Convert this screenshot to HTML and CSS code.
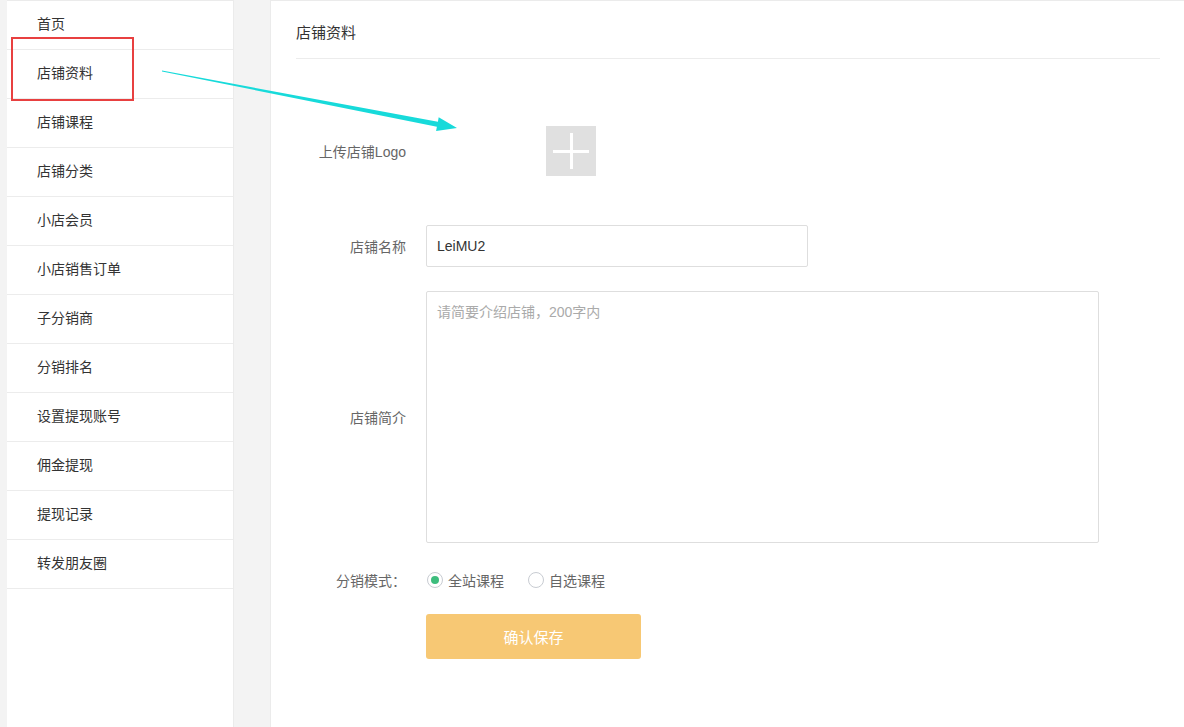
FILE: index.html
```html
<!DOCTYPE html>
<html lang="zh-CN">
<head>
    <meta charset="UTF-8">
    <title>店铺资料</title>
    <link rel="stylesheet" href="styles.css">
</head>
<body>
<div class="page">
    <ul class="side-nav">
        <li>首页</li>
        <li>店铺资料</li>
        <li>店铺课程</li>
        <li>店铺分类</li>
        <li>小店会员</li>
        <li>小店销售订单</li>
        <li>子分销商</li>
        <li>分销排名</li>
        <li>设置提现账号</li>
        <li>佣金提现</li>
        <li>提现记录</li>
        <li>转发朋友圈</li>
    </ul>

    <div class="main">
        <h2 class="main-title">店铺资料</h2>

        <div class="form-row row-logo">
            <label class="form-label">上传店铺Logo</label>
            <div class="logo-field">
                <div class="logo-upload"></div>
            </div>
        </div>

        <div class="form-row row-name">
            <label class="form-label">店铺名称</label>
            <input class="text-input" type="text" value="LeiMU2">
        </div>

        <div class="form-row row-intro">
            <label class="form-label">店铺简介</label>
            <textarea class="text-area" placeholder="请简要介绍店铺，200字内"></textarea>
        </div>

        <div class="form-row row-mode">
            <label class="form-label">分销模式：</label>
            <div class="radio-group">
                <span class="radio checked"></span><span class="radio-text">全站课程</span>
                <span class="radio"></span><span class="radio-text">自选课程</span>
            </div>
        </div>

        <div class="form-row row-submit">
            <span class="form-label"></span>
            <button class="save-btn">确认保存</button>
        </div>
    </div>
</div>

<!-- annotation overlay -->
<div class="mark-box"></div>
<svg class="mark-arrow" width="1184" height="727" viewBox="0 0 1184 727">
    <polygon fill="#17dada" points="162,70.6 437.9,121.7 438.7,117.3 457,128 436.1,131.1 436.9,126.7 162,71.4"/>
</svg>
</body>
</html>
```

FILE: styles.css
```css
* {
    box-sizing: border-box;
}

html, body {
    margin: 0;
    height: 100%;
}

body {
    background-color: #f3f3f3;
    font-family: "Liberation Sans", "Noto Sans CJK SC", sans-serif;
    font-size: 14px;
    color: #333;
}

.page {
    display: flex;
    gap: 36px;
    height: 100%;
    padding-left: 7px;
}

/* Sidebar */
.side-nav {
    list-style: none;
    margin: 0;
    padding: 0;
    width: 227px;
    background-color: #fff;
    border-top: 1px solid #ebebeb;
    border-right: 1px solid #ebebeb;
}

.side-nav li {
    height: 49px;
    line-height: 46px;
    padding-left: 30px;
    border-bottom: 1px solid #ececec;
    color: #333;
}

/* Main panel */
.main {
    flex: 1;
    background-color: #fff;
    border-top: 1px solid #ebebeb;
    border-left: 1px solid #ebebeb;
    padding: 0 24px 0 25px;
}

.main-title {
    margin: 0;
    height: 58px;
    padding-top: 22px;
    font-size: 15px;
    font-weight: normal;
    line-height: 20px;
    color: #333;
    border-bottom: 1px solid #ececec;
}

.form-row {
    display: flex;
    align-items: center;
    gap: 20px;
}

.form-label {
    width: 110px;
    flex-shrink: 0;
    text-align: right;
    color: #666;
    font-size: 14px;
}

.row-logo {
    margin-top: 67px;
    height: 50px;
}

.logo-field {
    padding-left: 120px;
}

.logo-upload {
    position: relative;
    width: 50px;
    height: 50px;
    background-color: #e0e0e0;
}

.logo-upload::before,
.logo-upload::after {
    content: "";
    position: absolute;
    background-color: #fff;
}

.logo-upload::before {
    left: 7px;
    top: 24px;
    width: 36px;
    height: 3px;
}

.logo-upload::after {
    left: 24px;
    top: 7px;
    width: 3px;
    height: 36px;
}

.row-name {
    margin-top: 49px;
}

.text-input {
    width: 382px;
    height: 42px;
    padding: 0 10px;
    border: 1px solid #dedede;
    border-radius: 2px;
    font-family: "Liberation Sans", "Noto Sans CJK SC", sans-serif;
    font-size: 14px;
    color: #333;
    outline: none;
}

.row-intro {
    margin-top: 24px;
}

.text-area {
    width: 673px;
    height: 252px;
    padding: 10px;
    border: 1px solid #dedede;
    border-radius: 2px;
    resize: none;
    font-family: "Liberation Sans", "Noto Sans CJK SC", sans-serif;
    font-size: 14px;
    line-height: 20px;
    outline: none;
}

.text-area::placeholder {
    color: #aaa;
}

.row-mode {
    margin-top: 27px;
    height: 20px;
}

.radio-group {
    display: flex;
    align-items: center;
    color: #666;
}

.radio {
    position: relative;
    width: 16px;
    height: 16px;
    border: 1px solid #c8ccd2;
    border-radius: 50%;
    margin-left: 1px;
    margin-right: 5px;
}

.radio.checked::after {
    content: "";
    position: absolute;
    left: 3px;
    top: 3px;
    width: 8px;
    height: 8px;
    border-radius: 50%;
    background-color: #3dbd7d;
}

.radio-text {
    margin-right: 23px;
}

.row-submit {
    margin-top: 24px;
}

.save-btn {
    width: 215px;
    height: 45px;
    border: none;
    border-radius: 3px;
    background-color: #f7c874;
    color: #fff;
    font-family: "Liberation Sans", "Noto Sans CJK SC", sans-serif;
    font-size: 15px;
    cursor: pointer;
}

/* Annotation marks */
.mark-box {
    position: absolute;
    left: 11px;
    top: 37px;
    width: 123px;
    height: 64px;
    border: 2px solid #e84040;
}

.mark-arrow {
    position: absolute;
    left: 0;
    top: 0;
    pointer-events: none;
}
```
